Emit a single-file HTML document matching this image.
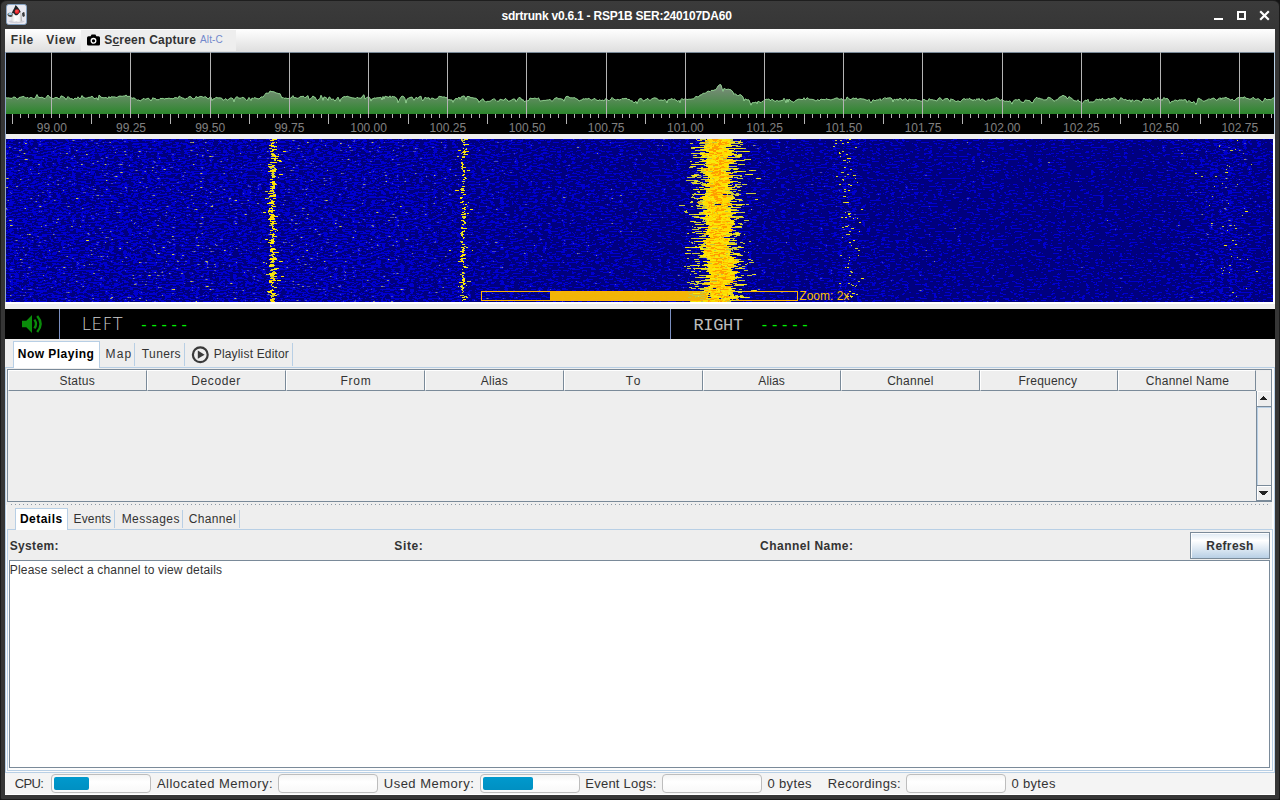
<!DOCTYPE html>
<html lang="en">
<head>
<meta charset="utf-8">
<title>sdrtrunk v0.6.1 - RSP1B SER:240107DA60</title>
<style>
*{box-sizing:border-box;margin:0;padding:0}
html,body{width:1280px;height:800px;overflow:hidden}
body{background:#141414;font-family:"Liberation Sans","DejaVu Sans",sans-serif;font-size:13px;color:#333;position:relative}
.abs{position:absolute}
.t{position:absolute;white-space:nowrap;line-height:1}
.b{font-weight:bold}
#frame{left:0;top:0;width:1280px;height:800px;background:#363636;border-radius:6px 6px 2px 2px;border:1px solid #1a1a1a}
#titlebar{left:1px;top:0;width:1278px;height:29px;border-radius:6px 6px 0 0;background:linear-gradient(#3b3b3b,#363636);border-top:1px solid #1e1e1e}
#content{left:5px;top:29px;width:1270px;height:766px;background:#eee}
#menubar{left:5px;top:29px;width:1270px;height:23px;background:linear-gradient(#fff,#dedede)}
#scbtn{left:81px;top:30px;width:155px;height:21px;background:#eee}
#spec{left:5px;top:52px;width:1270px;height:82px;background:#000}
#wf{left:6px;top:139px;width:1267px;height:163px;background:#000090;overflow:hidden}
#audio{left:5px;top:309px;width:1270px;height:30px;background:#000}
.tabsel{position:absolute;background:#fff;border:1px solid #b8cfe5;border-bottom:none}
.sepv{position:absolute;width:1px;background:#b8cfe5}
.hcell{position:absolute;top:370px;height:21px;border-left:1px solid #fff;border-top:1px solid #fff;border-right:1px solid #7a8a99;border-bottom:1px solid #7a8a99;text-align:center;font-size:13px;line-height:19px;color:#333}
.pb{position:absolute;top:774px;height:19px;width:100px;border:1px solid #bdbdbd;border-radius:4px;background:linear-gradient(#f4f4f4,#fff 40%,#f8f8f8)}
.pf{position:absolute;top:777px;height:13px;border-radius:2px;background:linear-gradient(#0099cd,#0090c2)}
.st{font-size:13.5px;color:#333;top:777px}
</style>
</head>
<body>
<div id="frame" class="abs"></div>
<div id="titlebar" class="abs"></div>

<!-- app icon -->
<svg class="abs" style="left:5.6px;top:4px" width="21" height="21" viewBox="0 0 21 21">
  <defs>
    <linearGradient id="dk1" x1="0" y1="0" x2="1" y2="0"><stop offset="0" stop-color="#d8d8d8"/><stop offset="0.35" stop-color="#fff"/><stop offset="0.75" stop-color="#f4f4f4"/><stop offset="1" stop-color="#a8a8a8"/></linearGradient>
    <radialGradient id="dk2" cx="0.4" cy="0.35" r="0.7"><stop offset="0" stop-color="#ff5a5a"/><stop offset="0.6" stop-color="#e8242a"/><stop offset="1" stop-color="#a01018"/></radialGradient>
  </defs>
  <rect x="0.5" y="0.5" width="20" height="20" rx="2.2" fill="#e9e9f1" stroke="#86a3c2"/>
  <ellipse cx="10.5" cy="17.6" rx="8" ry="1.6" fill="#cfcfd8"/>
  <path d="M5.9 8.8 C5.2 12 5.3 15 5.6 17 Q8 18.2 10.4 17.2 Q13.4 18.4 16 17 C16.1 14 15.6 10.5 14.7 8 L13 9 C11.5 12.2 9 11.6 8 9.4Z" fill="url(#dk1)"/>
  <path d="M9.6 1.1 C8.7 3.6 6.9 6.4 5.9 8.8 L8 9.4 C9 11.9 11.6 12.2 13 9 L14.7 8 C13.6 5.4 11.6 2.9 9.6 1.1Z" fill="#1f2426"/>
  <circle cx="11" cy="7.7" r="2.35" fill="url(#dk2)"/>
  <path d="M1.6 10.2 C1.6 8.6 6.6 8.2 6.7 10 L6.3 12.6 C4.5 13.4 2.2 12.8 1.8 11.6Z" fill="#4a4a48"/>
  <ellipse cx="4.1" cy="10" rx="2" ry="1" fill="#a8dcfa"/>
  <path d="M16 9.2 L17.6 8 L18.4 8.3 L18.9 12 L17.4 12.9 L16.4 12Z" fill="#3a3c3e"/>
</svg>

<!-- window controls -->
<div class="abs" style="left:1214px;top:18px;width:9px;height:2px;background:#fff"></div>
<div class="abs" style="left:1237px;top:11px;width:9px;height:9px;border:2px solid #fff"></div>
<svg class="abs" style="left:1259px;top:10px" width="11" height="11" viewBox="0 0 11 11"><path d="M1.2 1.2 L9.8 9.8 M9.8 1.2 L1.2 9.8" stroke="#fff" stroke-width="2.2" fill="none"/></svg>

<div id="content" class="abs"></div>
<div id="menubar" class="abs"></div>
<div id="scbtn" class="abs"></div>
<svg class="abs" style="left:87px;top:34px" width="13" height="12" viewBox="0 0 13 12">
  <path d="M1.5 2.2 H3.6 L4.6 0.6 H8.4 L9.4 2.2 H11.5 Q13 2.2 13 3.7 V10.2 Q13 11.6 11.5 11.6 H1.5 Q0 11.6 0 10.2 V3.7 Q0 2.2 1.5 2.2Z" fill="#000"/>
  <circle cx="6.5" cy="6.8" r="2.3" fill="none" stroke="#fff" stroke-width="1.3"/>
</svg>

<!-- spectrum -->
<div id="spec" class="abs"></div>
<svg class="abs" style="left:0;top:0" width="1280" height="140" viewBox="0 0 1280 140">
  <defs>
    <linearGradient id="sg" x1="0" y1="52" x2="0" y2="114" gradientUnits="userSpaceOnUse">
      <stop offset="0" stop-color="#d0d0d0"/><stop offset="0.55" stop-color="#7d8b7d"/><stop offset="0.78" stop-color="#558a55"/><stop offset="1" stop-color="#2c862c"/>
    </linearGradient>
  </defs>
  <rect x="5" y="52" width="1270" height="1" fill="#7a8a99"/>
  <polygon points="6,114 6,97.6 7,98.1 8,97.8 9,98.0 11,98.3 12,98.3 13,97.3 14,97.0 15,97.2 16,97.9 17,98.9 18,99.2 19,97.5 21,97.1 23,96.5 24,96.4 25,97.6 26,98.1 27,97.7 28,97.5 29,98.5 30,97.8 31,97.4 33,98.3 34,99.1 35,98.2 36,96.3 37,94.5 38,96.8 39,97.3 40,97.6 42,97.2 44,98.3 45,98.6 46,97.6 48,95.0 49,96.5 50,97.3 51,97.5 52,97.7 53,99.1 54,98.2 56,97.3 58,98.0 59,99.0 60,98.4 61,95.9 62,96.1 64,97.2 65,98.0 66,99.7 68,96.5 69,97.7 70,98.3 71,99.2 72,98.3 73,100.0 74,98.9 75,98.1 76,98.5 77,98.8 78,96.8 80,99.1 81,97.5 82,95.5 83,97.1 84,97.5 85,98.2 86,98.2 88,97.7 89,97.1 90,97.5 92,96.1 93,97.1 94,98.6 95,98.5 97,97.8 98,100.1 99,95.1 100,95.8 101,97.2 102,97.5 104,97.8 106,97.5 108,98.5 109,96.5 110,98.2 111,96.8 113,96.9 115,96.9 116,97.5 117,97.4 119,96.1 121,96.1 122,96.4 124,95.9 125,96.0 126,94.9 127,96.3 129,96.4 130,96.3 131,97.2 132,98.7 133,97.8 135,98.3 137,100.4 138,99.9 139,100.0 140,101.1 142,99.6 144,98.3 145,99.3 146,99.1 147,98.6 148,98.2 149,98.5 151,101.0 153,97.6 154,98.9 155,98.0 156,99.7 157,99.7 159,99.7 160,98.6 161,98.3 162,98.7 163,98.1 164,99.1 165,98.8 166,98.4 167,98.6 169,98.1 171,98.8 172,98.3 173,99.1 174,98.0 175,97.6 177,97.8 178,98.5 179,96.2 180,96.3 181,97.5 182,97.7 183,98.3 184,98.2 185,99.7 186,98.3 187,98.6 188,97.5 190,96.3 192,97.8 193,99.0 195,98.4 196,96.4 197,97.2 198,97.6 200,96.4 201,96.5 202,96.6 203,97.2 204,97.4 205,96.5 206,97.1 208,98.8 209,98.5 210,96.9 211,97.2 212,100.6 213,99.0 215,98.5 216,97.2 217,97.6 218,97.9 220,97.8 222,98.4 223,100.4 224,99.9 225,98.9 226,98.7 227,100.4 229,99.0 231,97.7 232,98.3 233,98.7 234,101.9 235,98.3 237,96.6 239,98.3 240,98.0 241,98.3 242,97.3 244,97.8 246,99.7 247,100.8 249,97.4 251,100.6 252,97.9 253,98.7 254,97.7 256,98.0 257,98.7 258,98.6 259,99.0 260,98.0 261,97.0 262,96.8 263,97.2 265,94.4 266,93.1 267,93.2 268,93.2 269,93.0 270,90.9 271,91.5 272,91.6 274,91.8 276,92.9 278,93.4 279,93.8 280,93.6 282,98.1 283,97.3 284,98.4 286,98.0 287,98.5 288,98.6 289,98.3 291,98.1 292,96.8 293,95.6 294,97.9 295,97.5 297,98.2 298,98.4 299,97.7 301,96.3 302,96.8 303,96.0 304,96.8 305,97.8 307,96.3 308,95.6 309,99.4 311,98.6 313,95.9 314,97.1 315,97.1 317,100.7 319,99.3 320,98.5 321,95.2 322,97.1 323,100.3 324,96.9 326,97.6 327,98.5 328,100.4 329,97.0 330,97.2 331,99.0 332,99.8 333,98.7 334,100.0 335,101.1 337,98.4 338,97.1 340,101.5 341,98.8 342,97.8 343,97.3 344,96.5 346,96.9 347,96.1 349,96.9 350,97.2 352,97.8 354,98.0 355,98.4 356,98.3 357,97.3 358,97.7 359,98.4 360,97.8 361,98.6 362,96.6 364,94.7 365,99.1 366,98.2 367,97.2 369,97.1 370,98.3 371,101.1 372,98.7 373,99.1 374,97.8 375,98.3 377,97.8 379,97.7 380,97.5 381,97.3 382,100.0 383,96.4 384,99.1 385,96.2 387,96.8 389,97.3 390,95.8 391,97.7 392,96.4 393,96.5 394,97.0 395,96.7 396,98.0 397,98.6 398,102.7 400,98.6 401,97.1 402,96.0 403,96.4 404,96.9 405,98.7 406,103.1 407,99.1 409,97.9 410,97.5 412,97.0 414,100.3 416,97.3 418,98.5 419,96.9 421,96.2 422,100.0 423,100.9 425,97.2 426,97.9 427,98.1 429,97.7 430,99.6 431,98.5 432,98.0 434,98.8 435,99.5 436,98.9 437,99.0 438,97.9 439,96.2 440,96.5 441,96.5 443,97.2 444,96.8 445,97.2 446,98.0 447,97.3 448,100.0 449,99.6 451,100.0 452,99.9 453,102.4 454,99.9 455,99.8 456,98.0 457,99.2 458,98.3 459,97.0 460,99.2 461,97.1 463,96.1 464,95.9 465,96.7 466,100.3 467,96.5 469,96.5 471,97.7 472,97.6 474,98.1 476,98.3 478,100.0 479,102.5 480,101.0 482,99.5 483,98.7 484,100.9 485,101.2 486,102.2 487,101.3 489,101.4 491,100.9 492,99.5 493,99.6 494,98.5 495,99.8 496,100.4 497,101.4 498,100.9 499,101.3 500,99.2 502,99.8 503,100.0 504,100.3 505,98.7 506,98.7 507,99.8 508,101.2 510,101.0 511,100.4 512,99.8 513,99.0 514,99.0 515,99.2 516,101.8 518,98.8 519,97.4 520,97.8 521,98.2 522,100.3 523,99.4 524,101.3 525,101.9 526,100.4 527,100.7 528,100.8 529,100.1 530,98.0 531,98.4 533,98.6 534,98.3 535,98.0 536,98.6 537,98.8 538,97.8 539,98.4 540,101.2 541,100.8 542,100.8 544,100.3 545,100.5 547,100.0 549,99.9 550,99.3 552,101.5 554,99.2 555,98.1 556,98.1 557,97.4 558,98.8 559,98.7 561,98.8 562,99.2 563,99.5 564,101.2 565,98.5 566,96.6 568,96.3 569,97.2 571,98.0 572,97.6 573,98.2 574,97.4 576,98.6 577,99.1 578,99.6 579,101.1 581,100.0 582,100.0 583,98.6 584,99.2 586,98.6 587,99.1 589,98.2 591,100.2 593,99.5 594,98.6 595,98.5 596,99.9 597,100.2 598,100.7 599,100.4 600,99.6 601,100.9 602,100.0 603,100.3 604,101.0 605,99.3 606,98.5 607,99.4 609,100.9 610,99.7 611,99.4 612,97.4 613,98.5 614,99.3 616,100.1 618,99.2 619,100.1 620,99.7 621,99.5 622,98.5 623,98.8 625,98.5 626,98.3 627,98.6 628,99.8 629,99.1 630,100.1 631,101.3 632,100.4 633,101.9 634,102.9 636,101.3 637,103.7 639,99.1 641,98.4 642,99.2 643,100.7 644,101.0 645,99.7 646,100.0 647,98.6 648,98.6 649,99.9 650,100.5 652,98.7 653,98.5 654,97.8 656,98.1 657,98.5 659,100.4 660,100.1 661,100.1 662,100.0 663,100.7 664,99.8 665,99.4 666,100.7 667,103.0 668,99.8 669,99.7 671,99.1 672,98.4 673,99.8 674,98.8 676,100.2 678,101.5 679,100.2 680,102.8 681,99.4 682,98.4 683,99.9 684,99.4 685,98.7 686,98.9 687,99.6 689,99.2 691,99.3 692,98.9 693,98.9 694,98.8 695,97.2 696,96.2 697,96.9 698,96.7 699,96.7 700,94.9 701,95.1 703,93.4 704,93.2 705,93.4 707,91.9 708,91.0 710,91.7 711,90.7 712,90.2 713,90.6 715,89.7 716,89.7 717,87.8 718,86.0 720,84.4 721,84.9 722,88.3 723,91.3 724,88.4 726,89.4 727,89.6 728,89.0 730,89.7 731,89.8 733,92.1 734,94.5 735,93.5 736,94.8 737,94.9 738,95.9 740,94.5 741,95.0 743,96.9 744,101.0 745,99.0 746,99.0 747,100.1 748,99.6 749,100.0 751,105.2 752,102.8 753,102.7 755,102.6 756,101.9 757,103.8 758,101.2 759,101.7 761,102.7 762,101.5 763,101.4 764,100.3 765,99.9 766,99.2 768,99.4 769,98.9 770,100.6 771,100.3 772,99.1 774,100.9 776,101.3 777,100.1 778,101.3 779,101.0 781,100.8 782,100.3 783,100.4 784,98.2 785,99.8 786,102.8 787,99.1 788,102.2 789,99.0 791,101.0 793,102.0 794,102.3 796,100.1 797,100.0 798,99.2 800,99.2 801,99.5 803,99.5 804,97.7 805,99.8 806,99.3 807,97.7 808,98.2 809,99.2 811,99.3 812,99.3 814,99.8 816,101.1 818,99.4 819,101.0 820,99.9 821,99.1 822,99.4 823,99.6 824,99.3 825,99.9 826,98.7 828,99.5 829,99.5 831,100.0 832,99.5 834,99.0 835,98.4 836,98.2 837,97.8 838,98.4 839,99.3 841,98.9 842,98.7 843,100.6 844,99.9 846,99.9 847,97.0 848,97.6 849,98.8 850,99.6 851,99.5 853,98.0 854,98.2 855,99.0 856,97.8 857,99.3 859,99.1 860,98.6 862,98.9 864,99.1 865,99.6 867,100.3 868,100.4 869,99.3 870,101.4 871,103.0 873,99.7 875,100.8 877,99.7 878,100.2 879,99.5 880,98.5 881,100.7 883,98.6 884,98.4 885,97.4 886,98.8 887,98.1 889,97.9 890,97.7 891,98.1 892,98.9 893,102.0 894,99.2 896,100.0 897,98.8 898,100.5 899,98.7 901,98.6 902,100.3 904,99.6 905,98.4 906,99.3 907,100.0 908,101.3 909,98.9 911,99.8 912,99.8 913,99.7 914,100.0 916,99.4 918,100.7 919,100.3 920,101.0 922,101.2 923,99.8 924,99.4 925,99.9 926,100.7 928,101.0 929,98.6 931,100.0 932,99.3 933,100.2 934,100.0 935,100.4 937,101.0 938,99.0 940,97.5 942,100.0 943,100.7 944,99.2 946,98.6 947,98.5 948,98.7 950,101.6 951,98.7 952,99.9 953,99.2 954,100.6 955,100.8 956,101.7 958,100.7 959,101.2 960,102.0 961,101.4 962,99.9 964,98.5 965,99.1 966,99.7 967,98.6 968,99.7 969,98.4 970,98.4 971,100.1 972,99.3 973,101.0 974,99.3 975,100.2 976,100.2 977,98.6 978,99.8 979,98.3 980,100.7 982,98.9 983,99.1 984,100.7 985,100.7 986,101.6 987,100.6 988,99.6 989,100.4 991,99.7 993,99.1 994,99.1 995,98.8 996,97.6 997,97.9 999,99.0 1000,100.9 1001,99.6 1002,99.9 1003,100.3 1004,100.9 1005,101.4 1007,101.0 1008,101.7 1010,100.8 1012,104.1 1013,101.4 1014,100.5 1015,99.9 1016,99.6 1017,100.2 1018,99.9 1019,99.0 1020,100.6 1021,101.8 1022,102.3 1024,102.4 1025,100.2 1026,100.0 1027,100.3 1029,100.6 1030,100.8 1031,102.7 1033,102.7 1034,100.0 1035,98.9 1036,97.7 1037,97.3 1038,98.6 1039,98.0 1040,98.5 1041,99.0 1042,98.9 1044,100.2 1045,99.7 1046,100.0 1047,99.3 1048,97.3 1049,97.4 1051,98.2 1052,99.4 1053,99.8 1054,101.5 1055,100.6 1056,99.6 1057,100.4 1058,99.0 1059,97.5 1061,96.6 1063,95.3 1065,96.3 1066,96.6 1067,98.7 1068,98.3 1069,96.5 1071,98.1 1072,98.4 1073,99.6 1074,101.0 1075,100.5 1076,101.3 1077,101.0 1078,99.7 1079,101.7 1080,101.3 1082,103.5 1083,102.4 1084,101.5 1085,100.2 1087,100.6 1088,99.2 1089,102.4 1091,101.8 1092,102.1 1094,101.8 1095,100.6 1096,99.2 1097,99.2 1098,99.8 1099,99.6 1100,98.8 1101,100.7 1102,98.4 1103,98.7 1104,99.8 1105,100.0 1106,99.8 1108,98.8 1109,98.1 1110,100.3 1111,98.4 1112,98.8 1113,98.0 1115,97.8 1117,99.8 1118,100.9 1119,100.6 1121,97.5 1122,98.8 1123,98.8 1124,99.9 1125,99.5 1126,99.3 1127,100.9 1128,100.1 1129,100.5 1130,99.7 1131,102.1 1132,99.8 1133,100.3 1134,101.5 1135,100.7 1136,100.2 1137,100.2 1139,100.8 1140,101.2 1141,102.3 1142,101.7 1144,98.1 1145,99.8 1146,99.2 1147,99.4 1148,99.6 1149,98.6 1150,99.5 1151,99.7 1153,101.0 1154,99.8 1155,98.7 1156,99.1 1157,99.4 1158,97.3 1159,99.7 1160,99.1 1161,99.1 1162,100.6 1163,98.8 1164,97.4 1165,98.9 1167,98.4 1168,99.0 1169,100.5 1170,103.3 1172,101.1 1173,101.5 1175,99.9 1177,100.7 1178,101.1 1179,99.7 1180,100.2 1181,99.8 1183,100.2 1185,99.5 1186,100.0 1187,102.5 1189,100.3 1190,101.7 1191,102.1 1192,102.9 1193,102.1 1194,101.5 1196,104.7 1197,102.3 1198,98.4 1199,98.2 1200,99.1 1201,99.5 1202,100.2 1203,101.2 1205,101.0 1206,100.4 1207,100.0 1208,99.7 1209,98.6 1210,99.7 1211,99.0 1213,98.2 1214,98.1 1215,99.1 1217,100.6 1218,99.0 1219,98.7 1220,97.6 1221,99.3 1222,98.0 1223,98.2 1225,97.8 1226,97.1 1227,98.2 1229,98.8 1231,100.3 1232,99.0 1233,99.8 1234,100.9 1236,99.3 1237,97.9 1238,98.0 1239,97.0 1240,97.3 1241,98.1 1242,97.1 1243,98.3 1244,96.7 1246,98.0 1247,98.6 1248,98.4 1249,99.2 1251,99.0 1252,98.4 1253,97.2 1254,98.1 1255,99.1 1256,99.3 1257,99.2 1258,98.5 1260,100.1 1261,100.6 1262,101.9 1263,101.9 1265,98.0 1266,99.2 1267,99.9 1268,99.5 1269,99.4 1271,99.8 1273,97.7 1274,98.4 1274,114" fill="url(#sg)"/>
  <polyline points="6,97.6 7,98.1 8,97.8 9,98.0 11,98.3 12,98.3 13,97.3 14,97.0 15,97.2 16,97.9 17,98.9 18,99.2 19,97.5 21,97.1 23,96.5 24,96.4 25,97.6 26,98.1 27,97.7 28,97.5 29,98.5 30,97.8 31,97.4 33,98.3 34,99.1 35,98.2 36,96.3 37,94.5 38,96.8 39,97.3 40,97.6 42,97.2 44,98.3 45,98.6 46,97.6 48,95.0 49,96.5 50,97.3 51,97.5 52,97.7 53,99.1 54,98.2 56,97.3 58,98.0 59,99.0 60,98.4 61,95.9 62,96.1 64,97.2 65,98.0 66,99.7 68,96.5 69,97.7 70,98.3 71,99.2 72,98.3 73,100.0 74,98.9 75,98.1 76,98.5 77,98.8 78,96.8 80,99.1 81,97.5 82,95.5 83,97.1 84,97.5 85,98.2 86,98.2 88,97.7 89,97.1 90,97.5 92,96.1 93,97.1 94,98.6 95,98.5 97,97.8 98,100.1 99,95.1 100,95.8 101,97.2 102,97.5 104,97.8 106,97.5 108,98.5 109,96.5 110,98.2 111,96.8 113,96.9 115,96.9 116,97.5 117,97.4 119,96.1 121,96.1 122,96.4 124,95.9 125,96.0 126,94.9 127,96.3 129,96.4 130,96.3 131,97.2 132,98.7 133,97.8 135,98.3 137,100.4 138,99.9 139,100.0 140,101.1 142,99.6 144,98.3 145,99.3 146,99.1 147,98.6 148,98.2 149,98.5 151,101.0 153,97.6 154,98.9 155,98.0 156,99.7 157,99.7 159,99.7 160,98.6 161,98.3 162,98.7 163,98.1 164,99.1 165,98.8 166,98.4 167,98.6 169,98.1 171,98.8 172,98.3 173,99.1 174,98.0 175,97.6 177,97.8 178,98.5 179,96.2 180,96.3 181,97.5 182,97.7 183,98.3 184,98.2 185,99.7 186,98.3 187,98.6 188,97.5 190,96.3 192,97.8 193,99.0 195,98.4 196,96.4 197,97.2 198,97.6 200,96.4 201,96.5 202,96.6 203,97.2 204,97.4 205,96.5 206,97.1 208,98.8 209,98.5 210,96.9 211,97.2 212,100.6 213,99.0 215,98.5 216,97.2 217,97.6 218,97.9 220,97.8 222,98.4 223,100.4 224,99.9 225,98.9 226,98.7 227,100.4 229,99.0 231,97.7 232,98.3 233,98.7 234,101.9 235,98.3 237,96.6 239,98.3 240,98.0 241,98.3 242,97.3 244,97.8 246,99.7 247,100.8 249,97.4 251,100.6 252,97.9 253,98.7 254,97.7 256,98.0 257,98.7 258,98.6 259,99.0 260,98.0 261,97.0 262,96.8 263,97.2 265,94.4 266,93.1 267,93.2 268,93.2 269,93.0 270,90.9 271,91.5 272,91.6 274,91.8 276,92.9 278,93.4 279,93.8 280,93.6 282,98.1 283,97.3 284,98.4 286,98.0 287,98.5 288,98.6 289,98.3 291,98.1 292,96.8 293,95.6 294,97.9 295,97.5 297,98.2 298,98.4 299,97.7 301,96.3 302,96.8 303,96.0 304,96.8 305,97.8 307,96.3 308,95.6 309,99.4 311,98.6 313,95.9 314,97.1 315,97.1 317,100.7 319,99.3 320,98.5 321,95.2 322,97.1 323,100.3 324,96.9 326,97.6 327,98.5 328,100.4 329,97.0 330,97.2 331,99.0 332,99.8 333,98.7 334,100.0 335,101.1 337,98.4 338,97.1 340,101.5 341,98.8 342,97.8 343,97.3 344,96.5 346,96.9 347,96.1 349,96.9 350,97.2 352,97.8 354,98.0 355,98.4 356,98.3 357,97.3 358,97.7 359,98.4 360,97.8 361,98.6 362,96.6 364,94.7 365,99.1 366,98.2 367,97.2 369,97.1 370,98.3 371,101.1 372,98.7 373,99.1 374,97.8 375,98.3 377,97.8 379,97.7 380,97.5 381,97.3 382,100.0 383,96.4 384,99.1 385,96.2 387,96.8 389,97.3 390,95.8 391,97.7 392,96.4 393,96.5 394,97.0 395,96.7 396,98.0 397,98.6 398,102.7 400,98.6 401,97.1 402,96.0 403,96.4 404,96.9 405,98.7 406,103.1 407,99.1 409,97.9 410,97.5 412,97.0 414,100.3 416,97.3 418,98.5 419,96.9 421,96.2 422,100.0 423,100.9 425,97.2 426,97.9 427,98.1 429,97.7 430,99.6 431,98.5 432,98.0 434,98.8 435,99.5 436,98.9 437,99.0 438,97.9 439,96.2 440,96.5 441,96.5 443,97.2 444,96.8 445,97.2 446,98.0 447,97.3 448,100.0 449,99.6 451,100.0 452,99.9 453,102.4 454,99.9 455,99.8 456,98.0 457,99.2 458,98.3 459,97.0 460,99.2 461,97.1 463,96.1 464,95.9 465,96.7 466,100.3 467,96.5 469,96.5 471,97.7 472,97.6 474,98.1 476,98.3 478,100.0 479,102.5 480,101.0 482,99.5 483,98.7 484,100.9 485,101.2 486,102.2 487,101.3 489,101.4 491,100.9 492,99.5 493,99.6 494,98.5 495,99.8 496,100.4 497,101.4 498,100.9 499,101.3 500,99.2 502,99.8 503,100.0 504,100.3 505,98.7 506,98.7 507,99.8 508,101.2 510,101.0 511,100.4 512,99.8 513,99.0 514,99.0 515,99.2 516,101.8 518,98.8 519,97.4 520,97.8 521,98.2 522,100.3 523,99.4 524,101.3 525,101.9 526,100.4 527,100.7 528,100.8 529,100.1 530,98.0 531,98.4 533,98.6 534,98.3 535,98.0 536,98.6 537,98.8 538,97.8 539,98.4 540,101.2 541,100.8 542,100.8 544,100.3 545,100.5 547,100.0 549,99.9 550,99.3 552,101.5 554,99.2 555,98.1 556,98.1 557,97.4 558,98.8 559,98.7 561,98.8 562,99.2 563,99.5 564,101.2 565,98.5 566,96.6 568,96.3 569,97.2 571,98.0 572,97.6 573,98.2 574,97.4 576,98.6 577,99.1 578,99.6 579,101.1 581,100.0 582,100.0 583,98.6 584,99.2 586,98.6 587,99.1 589,98.2 591,100.2 593,99.5 594,98.6 595,98.5 596,99.9 597,100.2 598,100.7 599,100.4 600,99.6 601,100.9 602,100.0 603,100.3 604,101.0 605,99.3 606,98.5 607,99.4 609,100.9 610,99.7 611,99.4 612,97.4 613,98.5 614,99.3 616,100.1 618,99.2 619,100.1 620,99.7 621,99.5 622,98.5 623,98.8 625,98.5 626,98.3 627,98.6 628,99.8 629,99.1 630,100.1 631,101.3 632,100.4 633,101.9 634,102.9 636,101.3 637,103.7 639,99.1 641,98.4 642,99.2 643,100.7 644,101.0 645,99.7 646,100.0 647,98.6 648,98.6 649,99.9 650,100.5 652,98.7 653,98.5 654,97.8 656,98.1 657,98.5 659,100.4 660,100.1 661,100.1 662,100.0 663,100.7 664,99.8 665,99.4 666,100.7 667,103.0 668,99.8 669,99.7 671,99.1 672,98.4 673,99.8 674,98.8 676,100.2 678,101.5 679,100.2 680,102.8 681,99.4 682,98.4 683,99.9 684,99.4 685,98.7 686,98.9 687,99.6 689,99.2 691,99.3 692,98.9 693,98.9 694,98.8 695,97.2 696,96.2 697,96.9 698,96.7 699,96.7 700,94.9 701,95.1 703,93.4 704,93.2 705,93.4 707,91.9 708,91.0 710,91.7 711,90.7 712,90.2 713,90.6 715,89.7 716,89.7 717,87.8 718,86.0 720,84.4 721,84.9 722,88.3 723,91.3 724,88.4 726,89.4 727,89.6 728,89.0 730,89.7 731,89.8 733,92.1 734,94.5 735,93.5 736,94.8 737,94.9 738,95.9 740,94.5 741,95.0 743,96.9 744,101.0 745,99.0 746,99.0 747,100.1 748,99.6 749,100.0 751,105.2 752,102.8 753,102.7 755,102.6 756,101.9 757,103.8 758,101.2 759,101.7 761,102.7 762,101.5 763,101.4 764,100.3 765,99.9 766,99.2 768,99.4 769,98.9 770,100.6 771,100.3 772,99.1 774,100.9 776,101.3 777,100.1 778,101.3 779,101.0 781,100.8 782,100.3 783,100.4 784,98.2 785,99.8 786,102.8 787,99.1 788,102.2 789,99.0 791,101.0 793,102.0 794,102.3 796,100.1 797,100.0 798,99.2 800,99.2 801,99.5 803,99.5 804,97.7 805,99.8 806,99.3 807,97.7 808,98.2 809,99.2 811,99.3 812,99.3 814,99.8 816,101.1 818,99.4 819,101.0 820,99.9 821,99.1 822,99.4 823,99.6 824,99.3 825,99.9 826,98.7 828,99.5 829,99.5 831,100.0 832,99.5 834,99.0 835,98.4 836,98.2 837,97.8 838,98.4 839,99.3 841,98.9 842,98.7 843,100.6 844,99.9 846,99.9 847,97.0 848,97.6 849,98.8 850,99.6 851,99.5 853,98.0 854,98.2 855,99.0 856,97.8 857,99.3 859,99.1 860,98.6 862,98.9 864,99.1 865,99.6 867,100.3 868,100.4 869,99.3 870,101.4 871,103.0 873,99.7 875,100.8 877,99.7 878,100.2 879,99.5 880,98.5 881,100.7 883,98.6 884,98.4 885,97.4 886,98.8 887,98.1 889,97.9 890,97.7 891,98.1 892,98.9 893,102.0 894,99.2 896,100.0 897,98.8 898,100.5 899,98.7 901,98.6 902,100.3 904,99.6 905,98.4 906,99.3 907,100.0 908,101.3 909,98.9 911,99.8 912,99.8 913,99.7 914,100.0 916,99.4 918,100.7 919,100.3 920,101.0 922,101.2 923,99.8 924,99.4 925,99.9 926,100.7 928,101.0 929,98.6 931,100.0 932,99.3 933,100.2 934,100.0 935,100.4 937,101.0 938,99.0 940,97.5 942,100.0 943,100.7 944,99.2 946,98.6 947,98.5 948,98.7 950,101.6 951,98.7 952,99.9 953,99.2 954,100.6 955,100.8 956,101.7 958,100.7 959,101.2 960,102.0 961,101.4 962,99.9 964,98.5 965,99.1 966,99.7 967,98.6 968,99.7 969,98.4 970,98.4 971,100.1 972,99.3 973,101.0 974,99.3 975,100.2 976,100.2 977,98.6 978,99.8 979,98.3 980,100.7 982,98.9 983,99.1 984,100.7 985,100.7 986,101.6 987,100.6 988,99.6 989,100.4 991,99.7 993,99.1 994,99.1 995,98.8 996,97.6 997,97.9 999,99.0 1000,100.9 1001,99.6 1002,99.9 1003,100.3 1004,100.9 1005,101.4 1007,101.0 1008,101.7 1010,100.8 1012,104.1 1013,101.4 1014,100.5 1015,99.9 1016,99.6 1017,100.2 1018,99.9 1019,99.0 1020,100.6 1021,101.8 1022,102.3 1024,102.4 1025,100.2 1026,100.0 1027,100.3 1029,100.6 1030,100.8 1031,102.7 1033,102.7 1034,100.0 1035,98.9 1036,97.7 1037,97.3 1038,98.6 1039,98.0 1040,98.5 1041,99.0 1042,98.9 1044,100.2 1045,99.7 1046,100.0 1047,99.3 1048,97.3 1049,97.4 1051,98.2 1052,99.4 1053,99.8 1054,101.5 1055,100.6 1056,99.6 1057,100.4 1058,99.0 1059,97.5 1061,96.6 1063,95.3 1065,96.3 1066,96.6 1067,98.7 1068,98.3 1069,96.5 1071,98.1 1072,98.4 1073,99.6 1074,101.0 1075,100.5 1076,101.3 1077,101.0 1078,99.7 1079,101.7 1080,101.3 1082,103.5 1083,102.4 1084,101.5 1085,100.2 1087,100.6 1088,99.2 1089,102.4 1091,101.8 1092,102.1 1094,101.8 1095,100.6 1096,99.2 1097,99.2 1098,99.8 1099,99.6 1100,98.8 1101,100.7 1102,98.4 1103,98.7 1104,99.8 1105,100.0 1106,99.8 1108,98.8 1109,98.1 1110,100.3 1111,98.4 1112,98.8 1113,98.0 1115,97.8 1117,99.8 1118,100.9 1119,100.6 1121,97.5 1122,98.8 1123,98.8 1124,99.9 1125,99.5 1126,99.3 1127,100.9 1128,100.1 1129,100.5 1130,99.7 1131,102.1 1132,99.8 1133,100.3 1134,101.5 1135,100.7 1136,100.2 1137,100.2 1139,100.8 1140,101.2 1141,102.3 1142,101.7 1144,98.1 1145,99.8 1146,99.2 1147,99.4 1148,99.6 1149,98.6 1150,99.5 1151,99.7 1153,101.0 1154,99.8 1155,98.7 1156,99.1 1157,99.4 1158,97.3 1159,99.7 1160,99.1 1161,99.1 1162,100.6 1163,98.8 1164,97.4 1165,98.9 1167,98.4 1168,99.0 1169,100.5 1170,103.3 1172,101.1 1173,101.5 1175,99.9 1177,100.7 1178,101.1 1179,99.7 1180,100.2 1181,99.8 1183,100.2 1185,99.5 1186,100.0 1187,102.5 1189,100.3 1190,101.7 1191,102.1 1192,102.9 1193,102.1 1194,101.5 1196,104.7 1197,102.3 1198,98.4 1199,98.2 1200,99.1 1201,99.5 1202,100.2 1203,101.2 1205,101.0 1206,100.4 1207,100.0 1208,99.7 1209,98.6 1210,99.7 1211,99.0 1213,98.2 1214,98.1 1215,99.1 1217,100.6 1218,99.0 1219,98.7 1220,97.6 1221,99.3 1222,98.0 1223,98.2 1225,97.8 1226,97.1 1227,98.2 1229,98.8 1231,100.3 1232,99.0 1233,99.8 1234,100.9 1236,99.3 1237,97.9 1238,98.0 1239,97.0 1240,97.3 1241,98.1 1242,97.1 1243,98.3 1244,96.7 1246,98.0 1247,98.6 1248,98.4 1249,99.2 1251,99.0 1252,98.4 1253,97.2 1254,98.1 1255,99.1 1256,99.3 1257,99.2 1258,98.5 1260,100.1 1261,100.6 1262,101.9 1263,101.9 1265,98.0 1266,99.2 1267,99.9 1268,99.5 1269,99.4 1271,99.8 1273,97.7 1274,98.4" fill="none" stroke="#98dc98" stroke-width="1" stroke-opacity="0.9"/>
  <rect x="51" y="52" width="1" height="66" fill="#b4b4b4"/>
<rect x="130" y="52" width="1" height="66" fill="#b4b4b4"/>
<rect x="210" y="52" width="1" height="66" fill="#b4b4b4"/>
<rect x="289" y="52" width="1" height="66" fill="#b4b4b4"/>
<rect x="368" y="52" width="1" height="66" fill="#b4b4b4"/>
<rect x="447" y="52" width="1" height="66" fill="#b4b4b4"/>
<rect x="526" y="52" width="1" height="66" fill="#b4b4b4"/>
<rect x="606" y="52" width="1" height="66" fill="#b4b4b4"/>
<rect x="685" y="52" width="1" height="66" fill="#b4b4b4"/>
<rect x="764" y="52" width="1" height="66" fill="#b4b4b4"/>
<rect x="843" y="52" width="1" height="66" fill="#b4b4b4"/>
<rect x="922" y="52" width="1" height="66" fill="#b4b4b4"/>
<rect x="1002" y="52" width="1" height="66" fill="#b4b4b4"/>
<rect x="1081" y="52" width="1" height="66" fill="#b4b4b4"/>
<rect x="1160" y="52" width="1" height="66" fill="#b4b4b4"/>
<rect x="1239" y="52" width="1" height="66" fill="#b4b4b4"/>
  <rect x="12" y="114" width="1" height="10" fill="#b4b4b4"/>
<rect x="20" y="114" width="1" height="4" fill="#b4b4b4"/>
<rect x="28" y="114" width="1" height="4" fill="#b4b4b4"/>
<rect x="35" y="114" width="1" height="4" fill="#b4b4b4"/>
<rect x="43" y="114" width="1" height="4" fill="#b4b4b4"/>
<rect x="59" y="114" width="1" height="4" fill="#b4b4b4"/>
<rect x="67" y="114" width="1" height="4" fill="#b4b4b4"/>
<rect x="75" y="114" width="1" height="4" fill="#b4b4b4"/>
<rect x="83" y="114" width="1" height="4" fill="#b4b4b4"/>
<rect x="91" y="114" width="1" height="10" fill="#b4b4b4"/>
<rect x="99" y="114" width="1" height="4" fill="#b4b4b4"/>
<rect x="107" y="114" width="1" height="4" fill="#b4b4b4"/>
<rect x="115" y="114" width="1" height="4" fill="#b4b4b4"/>
<rect x="123" y="114" width="1" height="4" fill="#b4b4b4"/>
<rect x="138" y="114" width="1" height="4" fill="#b4b4b4"/>
<rect x="146" y="114" width="1" height="4" fill="#b4b4b4"/>
<rect x="154" y="114" width="1" height="4" fill="#b4b4b4"/>
<rect x="162" y="114" width="1" height="4" fill="#b4b4b4"/>
<rect x="170" y="114" width="1" height="10" fill="#b4b4b4"/>
<rect x="178" y="114" width="1" height="4" fill="#b4b4b4"/>
<rect x="186" y="114" width="1" height="4" fill="#b4b4b4"/>
<rect x="194" y="114" width="1" height="4" fill="#b4b4b4"/>
<rect x="202" y="114" width="1" height="4" fill="#b4b4b4"/>
<rect x="218" y="114" width="1" height="4" fill="#b4b4b4"/>
<rect x="226" y="114" width="1" height="4" fill="#b4b4b4"/>
<rect x="233" y="114" width="1" height="4" fill="#b4b4b4"/>
<rect x="241" y="114" width="1" height="4" fill="#b4b4b4"/>
<rect x="249" y="114" width="1" height="10" fill="#b4b4b4"/>
<rect x="257" y="114" width="1" height="4" fill="#b4b4b4"/>
<rect x="265" y="114" width="1" height="4" fill="#b4b4b4"/>
<rect x="273" y="114" width="1" height="4" fill="#b4b4b4"/>
<rect x="281" y="114" width="1" height="4" fill="#b4b4b4"/>
<rect x="297" y="114" width="1" height="4" fill="#b4b4b4"/>
<rect x="305" y="114" width="1" height="4" fill="#b4b4b4"/>
<rect x="313" y="114" width="1" height="4" fill="#b4b4b4"/>
<rect x="321" y="114" width="1" height="4" fill="#b4b4b4"/>
<rect x="328" y="114" width="1" height="10" fill="#b4b4b4"/>
<rect x="336" y="114" width="1" height="4" fill="#b4b4b4"/>
<rect x="344" y="114" width="1" height="4" fill="#b4b4b4"/>
<rect x="352" y="114" width="1" height="4" fill="#b4b4b4"/>
<rect x="360" y="114" width="1" height="4" fill="#b4b4b4"/>
<rect x="376" y="114" width="1" height="4" fill="#b4b4b4"/>
<rect x="384" y="114" width="1" height="4" fill="#b4b4b4"/>
<rect x="392" y="114" width="1" height="4" fill="#b4b4b4"/>
<rect x="400" y="114" width="1" height="4" fill="#b4b4b4"/>
<rect x="408" y="114" width="1" height="10" fill="#b4b4b4"/>
<rect x="416" y="114" width="1" height="4" fill="#b4b4b4"/>
<rect x="424" y="114" width="1" height="4" fill="#b4b4b4"/>
<rect x="431" y="114" width="1" height="4" fill="#b4b4b4"/>
<rect x="439" y="114" width="1" height="4" fill="#b4b4b4"/>
<rect x="455" y="114" width="1" height="4" fill="#b4b4b4"/>
<rect x="463" y="114" width="1" height="4" fill="#b4b4b4"/>
<rect x="471" y="114" width="1" height="4" fill="#b4b4b4"/>
<rect x="479" y="114" width="1" height="4" fill="#b4b4b4"/>
<rect x="487" y="114" width="1" height="10" fill="#b4b4b4"/>
<rect x="495" y="114" width="1" height="4" fill="#b4b4b4"/>
<rect x="503" y="114" width="1" height="4" fill="#b4b4b4"/>
<rect x="511" y="114" width="1" height="4" fill="#b4b4b4"/>
<rect x="519" y="114" width="1" height="4" fill="#b4b4b4"/>
<rect x="534" y="114" width="1" height="4" fill="#b4b4b4"/>
<rect x="542" y="114" width="1" height="4" fill="#b4b4b4"/>
<rect x="550" y="114" width="1" height="4" fill="#b4b4b4"/>
<rect x="558" y="114" width="1" height="4" fill="#b4b4b4"/>
<rect x="566" y="114" width="1" height="10" fill="#b4b4b4"/>
<rect x="574" y="114" width="1" height="4" fill="#b4b4b4"/>
<rect x="582" y="114" width="1" height="4" fill="#b4b4b4"/>
<rect x="590" y="114" width="1" height="4" fill="#b4b4b4"/>
<rect x="598" y="114" width="1" height="4" fill="#b4b4b4"/>
<rect x="614" y="114" width="1" height="4" fill="#b4b4b4"/>
<rect x="622" y="114" width="1" height="4" fill="#b4b4b4"/>
<rect x="629" y="114" width="1" height="4" fill="#b4b4b4"/>
<rect x="637" y="114" width="1" height="4" fill="#b4b4b4"/>
<rect x="645" y="114" width="1" height="10" fill="#b4b4b4"/>
<rect x="653" y="114" width="1" height="4" fill="#b4b4b4"/>
<rect x="661" y="114" width="1" height="4" fill="#b4b4b4"/>
<rect x="669" y="114" width="1" height="4" fill="#b4b4b4"/>
<rect x="677" y="114" width="1" height="4" fill="#b4b4b4"/>
<rect x="693" y="114" width="1" height="4" fill="#b4b4b4"/>
<rect x="701" y="114" width="1" height="4" fill="#b4b4b4"/>
<rect x="709" y="114" width="1" height="4" fill="#b4b4b4"/>
<rect x="717" y="114" width="1" height="4" fill="#b4b4b4"/>
<rect x="724" y="114" width="1" height="10" fill="#b4b4b4"/>
<rect x="732" y="114" width="1" height="4" fill="#b4b4b4"/>
<rect x="740" y="114" width="1" height="4" fill="#b4b4b4"/>
<rect x="748" y="114" width="1" height="4" fill="#b4b4b4"/>
<rect x="756" y="114" width="1" height="4" fill="#b4b4b4"/>
<rect x="772" y="114" width="1" height="4" fill="#b4b4b4"/>
<rect x="780" y="114" width="1" height="4" fill="#b4b4b4"/>
<rect x="788" y="114" width="1" height="4" fill="#b4b4b4"/>
<rect x="796" y="114" width="1" height="4" fill="#b4b4b4"/>
<rect x="804" y="114" width="1" height="10" fill="#b4b4b4"/>
<rect x="812" y="114" width="1" height="4" fill="#b4b4b4"/>
<rect x="820" y="114" width="1" height="4" fill="#b4b4b4"/>
<rect x="827" y="114" width="1" height="4" fill="#b4b4b4"/>
<rect x="835" y="114" width="1" height="4" fill="#b4b4b4"/>
<rect x="851" y="114" width="1" height="4" fill="#b4b4b4"/>
<rect x="859" y="114" width="1" height="4" fill="#b4b4b4"/>
<rect x="867" y="114" width="1" height="4" fill="#b4b4b4"/>
<rect x="875" y="114" width="1" height="4" fill="#b4b4b4"/>
<rect x="883" y="114" width="1" height="10" fill="#b4b4b4"/>
<rect x="891" y="114" width="1" height="4" fill="#b4b4b4"/>
<rect x="899" y="114" width="1" height="4" fill="#b4b4b4"/>
<rect x="907" y="114" width="1" height="4" fill="#b4b4b4"/>
<rect x="915" y="114" width="1" height="4" fill="#b4b4b4"/>
<rect x="930" y="114" width="1" height="4" fill="#b4b4b4"/>
<rect x="938" y="114" width="1" height="4" fill="#b4b4b4"/>
<rect x="946" y="114" width="1" height="4" fill="#b4b4b4"/>
<rect x="954" y="114" width="1" height="4" fill="#b4b4b4"/>
<rect x="962" y="114" width="1" height="10" fill="#b4b4b4"/>
<rect x="970" y="114" width="1" height="4" fill="#b4b4b4"/>
<rect x="978" y="114" width="1" height="4" fill="#b4b4b4"/>
<rect x="986" y="114" width="1" height="4" fill="#b4b4b4"/>
<rect x="994" y="114" width="1" height="4" fill="#b4b4b4"/>
<rect x="1010" y="114" width="1" height="4" fill="#b4b4b4"/>
<rect x="1018" y="114" width="1" height="4" fill="#b4b4b4"/>
<rect x="1025" y="114" width="1" height="4" fill="#b4b4b4"/>
<rect x="1033" y="114" width="1" height="4" fill="#b4b4b4"/>
<rect x="1041" y="114" width="1" height="10" fill="#b4b4b4"/>
<rect x="1049" y="114" width="1" height="4" fill="#b4b4b4"/>
<rect x="1057" y="114" width="1" height="4" fill="#b4b4b4"/>
<rect x="1065" y="114" width="1" height="4" fill="#b4b4b4"/>
<rect x="1073" y="114" width="1" height="4" fill="#b4b4b4"/>
<rect x="1089" y="114" width="1" height="4" fill="#b4b4b4"/>
<rect x="1097" y="114" width="1" height="4" fill="#b4b4b4"/>
<rect x="1105" y="114" width="1" height="4" fill="#b4b4b4"/>
<rect x="1113" y="114" width="1" height="4" fill="#b4b4b4"/>
<rect x="1120" y="114" width="1" height="10" fill="#b4b4b4"/>
<rect x="1128" y="114" width="1" height="4" fill="#b4b4b4"/>
<rect x="1136" y="114" width="1" height="4" fill="#b4b4b4"/>
<rect x="1144" y="114" width="1" height="4" fill="#b4b4b4"/>
<rect x="1152" y="114" width="1" height="4" fill="#b4b4b4"/>
<rect x="1168" y="114" width="1" height="4" fill="#b4b4b4"/>
<rect x="1176" y="114" width="1" height="4" fill="#b4b4b4"/>
<rect x="1184" y="114" width="1" height="4" fill="#b4b4b4"/>
<rect x="1192" y="114" width="1" height="4" fill="#b4b4b4"/>
<rect x="1200" y="114" width="1" height="10" fill="#b4b4b4"/>
<rect x="1208" y="114" width="1" height="4" fill="#b4b4b4"/>
<rect x="1216" y="114" width="1" height="4" fill="#b4b4b4"/>
<rect x="1223" y="114" width="1" height="4" fill="#b4b4b4"/>
<rect x="1231" y="114" width="1" height="4" fill="#b4b4b4"/>
<rect x="1247" y="114" width="1" height="4" fill="#b4b4b4"/>
<rect x="1255" y="114" width="1" height="4" fill="#b4b4b4"/>
<rect x="1263" y="114" width="1" height="4" fill="#b4b4b4"/>
<rect x="1271" y="114" width="1" height="4" fill="#b4b4b4"/>
  <g font-family="Liberation Sans, DejaVu Sans, sans-serif" font-size="12" fill="#808080" text-anchor="middle">
  <text x="51.8" y="132">99.00</text>
<text x="131.0" y="132">99.25</text>
<text x="210.2" y="132">99.50</text>
<text x="289.4" y="132">99.75</text>
<text x="368.6" y="132">100.00</text>
<text x="447.8" y="132">100.25</text>
<text x="527.0" y="132">100.50</text>
<text x="606.2" y="132">100.75</text>
<text x="685.4" y="132">101.00</text>
<text x="764.6" y="132">101.25</text>
<text x="843.8" y="132">101.50</text>
<text x="923.0" y="132">101.75</text>
<text x="1002.2" y="132">102.00</text>
<text x="1081.4" y="132">102.25</text>
<text x="1160.6" y="132">102.50</text>
<text x="1239.8" y="132">102.75</text>
  </g>
  <rect x="5" y="52" width="1" height="82" fill="#8ea4c4"/>
  <rect x="1274" y="52" width="1" height="82" fill="#b8cfe5"/>
</svg>

<!-- waterfall -->
<div id="wf" class="abs"></div>
<svg class="abs" style="left:0;top:0" width="1280" height="310" viewBox="0 0 1280 310" shape-rendering="crispEdges">
  <defs>
    <linearGradient id="dens" x1="6" y1="0" x2="1274" y2="0" gradientUnits="userSpaceOnUse">
      <stop offset="0.0000" stop-color="#181818"/><stop offset="0.3028" stop-color="#161616"/><stop offset="0.3975" stop-color="#0e0e0e"/><stop offset="0.5599" stop-color="#080808"/><stop offset="0.6435" stop-color="#050505"/><stop offset="0.6617" stop-color="#121212"/><stop offset="0.6798" stop-color="#040404"/><stop offset="0.9022" stop-color="#010101"/><stop offset="0.9377" stop-color="#0a0a0a"/><stop offset="0.9614" stop-color="#141414"/><stop offset="0.9826" stop-color="#0a0a0a"/><stop offset="1.0000" stop-color="#060606"/>
    </linearGradient>
    <filter id="wfn" x="6" y="139" width="1267" height="163" filterUnits="userSpaceOnUse" color-interpolation-filters="sRGB">
      <feTurbulence type="fractalNoise" baseFrequency="0.21 0.64" numOctaves="2" seed="11" result="n"/>
      <feColorMatrix in="n" type="matrix" values="0.8 0 0 0 0  0.8 0 0 0 0  0.8 0 0 0 0  0 0 0 0 1" result="ng"/>
      <feComposite in="ng" in2="SourceGraphic" operator="arithmetic" k1="0" k2="1" k3="1" k4="0" result="v"/>
      <feComponentTransfer in="v">
        <feFuncR type="discrete" tableValues="0.00 0.00 0.00 0.00 0.00 0.00 0.00 0.00 0.00 0.00 0.00 0.00 0.00 0.00 0.00 0.00 0.00 0.00 0.00 0.00 0.00 0.00 0.00 0.00 0.00 0.00 0.00 0.00 0.00 0.00 0.00 0.00 0.00 0.00 0.27 0.27 0.55 0.55 0.82 0.82 0.98 0.98 0.98 0.98 0.98 0.98 0.98 0.98 0.98 0.98"/>
        <feFuncG type="discrete" tableValues="0.00 0.00 0.00 0.00 0.00 0.00 0.00 0.00 0.00 0.00 0.00 0.00 0.00 0.00 0.00 0.00 0.00 0.00 0.00 0.00 0.00 0.00 0.00 0.00 0.00 0.00 0.00 0.00 0.00 0.00 0.00 0.00 0.00 0.00 0.27 0.27 0.55 0.55 0.80 0.80 0.92 0.92 0.92 0.92 0.92 0.92 0.92 0.92 0.92 0.92"/>
        <feFuncB type="discrete" tableValues="0.50 0.50 0.50 0.50 0.50 0.50 0.50 0.50 0.50 0.50 0.50 0.50 0.50 0.50 0.50 0.50 0.50 0.50 0.50 0.50 0.50 0.50 0.50 0.50 0.50 0.82 0.82 0.82 0.82 0.82 0.82 0.82 0.82 0.82 0.74 0.74 0.48 0.48 0.25 0.25 0.04 0.04 0.04 0.04 0.04 0.04 0.04 0.04 0.04 0.04"/>
        <feFuncA type="linear" slope="0" intercept="1"/>
      </feComponentTransfer>
    </filter>
    <filter id="wfs" x="6" y="139" width="1267" height="163" filterUnits="userSpaceOnUse" color-interpolation-filters="sRGB">
      <feTurbulence type="fractalNoise" baseFrequency="0.09 0.7" numOctaves="2" seed="5" result="n"/>
      <feColorMatrix in="n" type="matrix" values="0.6 0 0 0 0  0.6 0 0 0 0  0.6 0 0 0 0  0 0 0 0 1" result="ng"/>
      <feComposite in="ng" in2="SourceGraphic" operator="arithmetic" k1="0" k2="1" k3="1" k4="0" result="v"/>
      <feColorMatrix in="v" type="matrix" values="1 0 0 0 0  0 1 0 0 0  0 0 1 0 0  1 0 0 0 0" result="va"/>
      <feComponentTransfer in="va">
        <feFuncR type="discrete" tableValues="0.80 0.80 0.80 0.80 0.80 0.80 0.80 0.80 0.80 0.80 0.80 0.80 0.80 0.80 0.80 0.80 0.80 0.80 0.80 0.80 0.80 0.80 0.80 0.80 0.80 0.80 0.80 0.80 0.80 0.80 0.78 0.78 0.78 0.97 0.97 0.97 0.97 1.00 1.00 1.00 1.00 1.00 1.00 1.00 1.00 1.00 1.00 1.00 1.00 1.00"/>
        <feFuncG type="discrete" tableValues="0.80 0.80 0.80 0.80 0.80 0.80 0.80 0.80 0.80 0.80 0.80 0.80 0.80 0.80 0.80 0.80 0.80 0.80 0.80 0.80 0.80 0.80 0.80 0.80 0.80 0.80 0.80 0.80 0.80 0.80 0.78 0.78 0.78 0.92 0.92 0.92 0.92 0.86 0.86 0.86 0.86 0.86 0.86 0.76 0.76 0.76 0.62 0.62 0.62 0.62"/>
        <feFuncB type="discrete" tableValues="0.25 0.25 0.25 0.25 0.25 0.25 0.25 0.25 0.25 0.25 0.25 0.25 0.25 0.25 0.25 0.25 0.25 0.25 0.25 0.25 0.25 0.25 0.25 0.25 0.25 0.25 0.25 0.25 0.25 0.25 0.25 0.25 0.25 0.05 0.05 0.05 0.05 0.00 0.00 0.00 0.00 0.00 0.00 0.00 0.00 0.00 0.00 0.00 0.00 0.00"/>
        <feFuncA type="discrete" tableValues="0.00 0.00 0.00 0.00 0.00 0.00 0.00 0.00 0.00 0.00 0.00 0.00 0.00 0.00 0.00 0.00 0.00 0.00 0.00 0.00 0.00 0.00 0.00 0.00 0.00 0.00 0.00 0.00 0.00 0.00 1.00 1.00 1.00 1.00 1.00 1.00 1.00 1.00 1.00 1.00 1.00 1.00 1.00 1.00 1.00 1.00 1.00 1.00 1.00 1.00"/>
      </feComponentTransfer>
    </filter>
    <linearGradient id="mg" x1="680" y1="0" x2="756" y2="0" gradientUnits="userSpaceOnUse">
      <stop offset="0" stop-color="#000"/><stop offset="0.1" stop-color="#262626"/><stop offset="0.25" stop-color="#444"/><stop offset="0.36" stop-color="#545454"/><stop offset="0.64" stop-color="#545454"/><stop offset="0.75" stop-color="#444"/><stop offset="0.9" stop-color="#262626"/><stop offset="1" stop-color="#000"/>
    </linearGradient>
  </defs>
  <g filter="url(#wfn)" fill="none" stroke-width="1">
    <rect x="6" y="139" width="1267" height="163" fill="url(#dens)" stroke="none"/>
  </g>
  <!-- zoom indicator -->
  <rect x="550" y="291" width="158" height="10" fill="#ffc000" fill-opacity="0.95"/>
  <rect x="481.5" y="291.5" width="316" height="9" fill="none" stroke="#ffb400"/>
  <g filter="url(#wfs)" fill="none" stroke-width="1">
    <rect x="680" y="139" width="76" height="163" fill="url(#mg)" stroke="none"/>
    <path d="M839 139h2M835 140h2M842 141h1M841 142h2M842 143h2M843 144h2M846 145h3M840 146h3M855 147h2M839 148h2M837 149h3M837 150h1M833 151h1M839 152h1M839 153h2M846 154h2M841 155h1M840 156h1M838 157h2M848 158h3M837 159h2M843 160h3M846 161h1M843 162h2M843 163h2M840 164h3M852 165h3M833 166h1M844 167h2M838 168h3M850 169h2M844 170h2M840 171h2M841 172h3M849 173h2M847 174h2M838 175h3M852 176h2M848 177h3M842 179h2M843 180h2M851 181h3M845 182h3M851 183h1M848 184h2M837 185h3M844 187h2M855 189h1M848 190h2M844 191h2M847 192h1M843 193h2M843 195h3M843 196h3M847 199h3M844 200h2M846 202h3M843 206h2M853 207h2M852 208h1M861 209h2M846 210h2M845 212h1M848 213h3M848 214h2M856 215h2M854 216h2M845 217h2M853 218h1M849 219h2M851 220h1M855 222h1M863 223h1M844 224h3M848 225h1M859 226h2M850 228h2M849 231h2M854 233h2M846 234h3M849 235h3M848 236h2M842 237h1M854 241h3M849 242h2M844 244h2M851 245h1M852 246h1M845 247h1M853 249h2M850 250h2M847 251h1M845 253h1M852 254h1M840 255h2M850 256h2M849 257h1M852 258h2M851 259h2M845 260h3M856 261h3M846 263h3M854 264h2M845 267h1M856 268h2M854 269h2M851 270h3M853 271h3M851 272h2M854 273h2M849 275h2M857 276h3M848 277h1M851 278h2M845 281h2M850 282h3M848 283h3M851 284h1M855 285h2M855 286h1M851 289h2M847 290h2M849 291h2M846 292h3M852 293h3M850 295h2M850 296h3M852 297h2M854 298h2M851 300h3M849 139h2M840 140h2M839 141h2M847 142h2M835 143h2M847 144h2M844 145h2M833 146h2M838 149h1M842 151h2M848 155h2M847 158h2M849 161h1M846 162h2M843 164h2M847 165h2M846 166h2M844 170h3M850 171h2M852 172h1M853 175h3M836 176h2M855 178h3M855 179h2M850 181h2M856 182h2M843 183h2M839 184h2M850 185h2M858 186h2M840 187h1M844 189h2M860 190h1M847 192h3M850 193h2M844 194h1M838 197h3M850 199h3M843 202h3M844 203h1M855 209h1M842 210h1M855 211h3M849 212h2M843 215h2M849 216h2M841 217h2M857 218h1M859 222h2M849 223h1M837 224h2M857 225h1M845 226h3M842 227h2M852 228h2M844 230h3M859 231h1M848 234h2M852 235h2M853 240h2M849 243h2M855 248h3M858 250h3M858 255h1M851 259h1M848 260h2M854 266h1M847 267h2M858 268h1M854 269h2M850 271h2M847 275h1M861 278h3M857 281h3M854 282h2M839 283h2M849 284h1M852 285h2M842 287h2M851 289h3M856 294h2M847 296h2M851 297h2M848 298h1M846 300h3" stroke="#494949"/>
    <path d="M1222 140h2M1226 144h1M1218 148h3M1232 149h2M1230 150h3M1228 151h2M1230 152h2M1208 153h1M1225 156h1M1226 158h2M1217 160h2M1222 161h2M1225 163h1M1208 164h2M1217 165h1M1229 166h2M1219 167h2M1226 169h3M1243 170h2M1225 172h3M1215 175h1M1215 176h3M1233 177h3M1235 178h3M1222 183h3M1231 186h2M1227 189h2M1232 191h3M1225 195h2M1211 196h2M1209 200h3M1228 203h1M1226 204h2M1209 205h1M1220 206h1M1229 208h2M1205 213h3M1234 214h3M1223 216h2M1215 217h3M1211 223h2M1216 224h2M1233 225h2M1243 226h2M1218 227h1M1235 228h2M1227 230h1M1228 231h1M1216 233h3M1236 234h1M1227 238h2M1225 240h1M1232 245h1M1238 247h2M1230 249h3M1217 250h2M1227 253h3M1220 254h2M1231 256h3M1216 261h2M1229 262h2M1229 265h2M1221 268h2M1223 270h3M1221 273h2M1223 275h2M1220 276h3M1247 278h2M1218 282h1M1227 287h2M1215 291h2M1232 292h2M1235 296h2M1230 300h1M1233 139h3M1237 140h1M1218 141h2M1215 143h3M1219 146h2M1245 147h1M1235 149h1M1204 154h3M1246 155h3M1262 156h2M1250 164h2M1227 165h2M1195 173h2M1216 175h2M1201 176h2M1237 184h1M1226 185h1M1214 186h1M1230 191h2M1229 194h1M1227 197h2M1243 199h3M1205 205h3M1245 211h3M1240 215h3M1243 219h2M1214 221h3M1216 223h2M1222 226h2M1211 233h2M1232 240h2M1235 244h2M1224 245h3M1237 252h1M1204 253h3M1202 255h2M1237 257h2M1247 259h1M1247 263h2M1204 264h1M1250 266h3M1239 268h2M1205 270h2M1256 271h2M1228 272h2M1228 285h2M1246 288h1M1232 290h2M1205 298h3M1249 300h1" stroke="#424242"/>
    <path d="M272 139h3M273 139h4M270 140h4M269 141h3M272 142h3M276 142h1M271 143h3M271 144h1M269 145h5M269 145h1M271 146h6M274 147h1M269 148h5M272 149h5M272 150h2M270 151h3M283 151h3M271 153h6M271 154h4M278 154h1M272 155h4M271 156h8M272 157h4M271 158h7M274 159h2M274 160h2M277 160h4M270 161h5M279 161h3M270 162h7M268 164h6M272 165h2M273 165h2M268 166h6M269 167h6M270 168h2M274 168h2M272 169h3M275 169h2M270 170h6M269 171h7M268 171h4M269 172h5M270 172h1M270 173h5M272 174h2M279 174h4M271 175h4M274 175h1M272 176h4M272 176h3M272 177h4M278 177h1M270 179h3M270 179h2M272 181h3M270 182h5M272 183h4M272 184h5M271 185h4M270 186h5M272 187h3M274 187h1M270 188h5M272 189h1M270 190h4M269 191h5M265 191h3M273 192h2M268 193h5M273 194h3M271 195h5M270 195h4M269 196h7M271 196h3M272 197h3M273 198h3M265 198h4M270 199h1M271 200h3M271 201h4M271 202h3M269 202h2M271 203h3M267 203h4M273 204h2M271 205h2M272 206h4M271 207h1M269 208h4M269 209h4M268 210h7M269 210h1M268 211h5M268 212h5M263 212h3M269 213h4M269 214h5M271 215h4M270 216h8M270 217h4M269 218h6M268 219h7M270 220h1M270 221h6M272 222h2M270 223h7M271 224h3M269 225h4M272 226h2M272 227h1M272 228h3M273 229h4M270 230h3M277 230h1M275 231h1M270 232h6M273 233h1M270 234h5M272 235h2M270 236h7M272 237h1M273 238h1M271 239h3M265 239h3M269 240h5M271 241h2M272 241h3M268 242h6M270 243h4M272 244h4M270 245h1M270 246h4M274 247h1M271 248h4M270 249h6M270 250h3M270 251h3M272 252h5M277 252h2M273 253h1M271 254h4M269 255h4M272 256h2M273 257h3M270 258h7M270 259h7M269 259h3M272 260h2M271 261h4M279 261h4M270 262h4M270 263h4M266 263h1M270 264h4M269 265h6M269 266h5M271 267h5M273 268h2M275 268h4M271 269h6M270 270h3M269 271h6M272 272h4M269 273h8M268 274h7M266 274h4M270 275h4M270 276h7M281 276h3M271 277h6M270 278h5M273 279h2M269 280h7M277 280h4M269 281h3M269 282h4M272 282h2M272 283h1M271 284h1M271 285h4M272 286h2M274 287h3M272 289h1M270 290h4M267 291h5M268 292h4M271 293h3M273 293h3M272 294h3M270 295h7M271 296h3M271 297h1M272 298h3M270 299h5M270 300h4M271 301h4M271 301h3" stroke="#686868"/>
    <path d="M461 139h1M464 139h4M462 140h3M461 140h1M462 141h1M463 142h2M463 144h2M465 144h4M464 145h1M463 148h1M466 148h1M463 149h1M465 149h2M464 150h1M458 150h3M463 151h2M465 151h4M462 152h4M464 153h1M461 153h1M463 154h1M464 154h4M460 155h2M462 156h3M462 157h3M461 159h1M461 161h2M461 162h2M461 163h2M462 164h2M462 165h1M461 166h2M462 167h4M461 168h2M462 169h1M463 170h2M467 170h3M463 171h2M463 172h2M463 174h2M462 175h2M464 177h2M465 178h2M473 178h2M463 179h2M463 181h1M462 181h3M460 183h4M462 186h3M463 187h1M461 188h3M460 189h4M461 190h4M455 190h4M460 191h3M461 192h3M463 194h1M463 194h3M463 195h1M460 197h3M460 198h2M459 199h3M462 201h2M462 201h2M460 202h3M468 202h1M462 204h2M465 204h2M464 207h1M464 207h2M462 208h3M463 209h3M470 209h3M464 211h1M462 212h2M464 213h2M467 213h2M462 214h4M461 214h4M462 216h4M463 216h3M462 217h4M462 217h4M462 218h3M461 220h3M463 221h2M471 221h3M464 222h2M464 223h2M462 224h2M462 224h1M462 226h1M461 227h2M461 228h4M465 228h2M463 230h2M462 231h3M461 232h2M460 233h3M461 234h3M461 235h2M462 236h1M463 237h2M463 238h1M462 240h2M460 241h3M461 242h2M462 244h3M464 245h1M464 246h2M461 247h3M466 247h2M463 248h2M462 249h2M461 250h4M472 250h1M460 251h4M462 252h2M462 254h4M461 255h4M460 256h3M463 257h1M461 258h4M462 258h4M460 259h3M461 260h2M461 261h3M458 261h3M463 262h1M463 264h1M463 266h3M464 267h4M462 269h1M462 272h2M462 273h3M460 274h3M462 275h2M462 276h1M469 276h2M462 277h2M463 278h2M462 279h3M462 280h3M463 281h2M467 281h4M461 282h3M459 282h3M463 283h3M463 284h2M461 285h2M466 285h1M460 286h3M458 286h1M461 287h3M462 288h2M461 289h2M462 290h1M461 291h3M462 292h1M462 294h2M461 295h3M460 295h4M464 296h3M462 297h3M466 297h2M463 299h3M462 300h1M468 300h2" stroke="#646464"/>
    <path d="M695 139h10M733 139h5M733 139h3M737 140h4M699 140h3M733 141h5M735 141h8M698 141h6M736 142h6M701 142h5M735 143h4M692 144h2M701 144h4M735 144h8M733 144h2M733 145h5M736 145h2M733 146h6M731 146h2M693 147h6M697 148h4M691 148h10M729 148h8M691 149h6M738 149h4M696 149h2M732 149h8M744 150h5M690 150h10M688 150h6M740 151h10M733 152h10M691 152h4M740 152h3M737 152h5M693 153h4M730 153h8M696 154h10M691 154h10M730 154h8M738 154h4M695 155h2M729 155h5M700 156h3M732 156h3M734 157h4M699 157h5M701 158h6M703 158h3M734 158h5M696 158h5M741 159h10M733 160h2M702 160h4M734 160h4M740 160h4M690 161h2M698 162h4M692 162h10M704 162h3M733 163h2M691 164h10M693 164h6M731 164h2M693 165h4M702 165h2M698 166h8M696 166h3M729 166h4M691 166h10M687 167h8M696 167h5M739 167h6M732 168h4M695 168h5M700 169h2M732 170h10M731 170h2M748 170h8M732 171h10M682 171h2M691 171h8M696 172h8M742 172h2M731 172h10M734 173h6M730 173h4M736 174h4M743 174h10M684 175h5M732 175h4M699 176h3M692 176h4M734 177h8M687 177h8M698 178h10M756 178h5M694 178h10M734 179h4M730 179h10M692 180h8M686 180h6M730 181h6M734 181h2M692 181h8M731 181h2M703 182h6M733 182h3M736 182h5M738 183h8M734 184h4M733 184h3M745 185h4M733 185h4M690 186h4M687 186h8M737 187h3M698 187h2M701 188h5M732 189h4M730 189h5M697 189h8M736 189h8M730 190h6M702 190h2M730 190h2M737 191h6M732 191h5M701 191h2M732 192h4M736 193h2M746 193h10M700 193h6M691 194h3M691 194h2M736 195h2M700 195h6M734 195h2M692 196h4M693 196h8M732 197h10M680 197h6M732 197h6M689 198h3M732 198h10M735 198h5M698 199h2M754 199h4M697 199h3M731 200h5M701 200h3M739 200h5M691 201h2M738 201h8M698 202h4M730 202h8M690 202h3M695 203h2M732 203h5M696 204h5M746 204h3M732 204h4M692 204h10M679 205h6M733 205h8M740 205h2M703 206h2M691 206h2M689 207h5M698 207h2M734 207h8M734 208h10M694 209h8M746 209h6M696 209h2M701 210h3M700 210h6M686 210h6M736 210h3M681 211h6M731 211h8M701 212h3M697 212h6M740 212h5M685 212h10M732 213h8M701 213h5M733 213h8M700 213h3M689 214h8M744 214h3M733 214h2M702 214h3M703 215h3M698 215h8M699 215h6M734 216h8M699 216h3M698 216h2M736 217h6M741 217h6M741 217h6M736 218h10M733 218h3M691 218h8M743 219h3M730 219h4M701 219h3M700 220h4M732 220h3M730 220h5M738 221h6M691 221h8M736 222h6M737 222h3M736 223h6M698 224h5M695 224h10M733 225h4M692 226h6M738 226h3M737 226h10M731 226h4M693 227h3M743 228h2M698 228h10M699 229h6M732 230h4M702 230h2M732 230h4M702 231h3M703 231h3M704 231h2M693 232h2M696 232h6M700 233h4M731 233h6M744 233h6M687 233h2M736 234h10M732 234h4M736 234h8M704 235h4M732 235h8M748 235h3M698 236h5M730 236h5M694 237h6M731 237h5M738 237h2M732 238h8M699 239h6M696 240h4M692 240h2M731 241h3M735 241h8M689 241h3M735 242h8M694 243h5M730 243h8M732 244h3M732 244h2M742 244h6M704 244h2M697 245h8M732 245h6M693 245h8M699 246h4M695 246h2M692 247h10M685 247h8M727 248h4M733 249h6M733 249h2M695 249h5M687 250h8M698 250h3M735 250h4M735 251h10M697 251h2M731 252h10M689 252h5M731 252h10M685 253h10M730 253h6M693 254h10M732 254h4M737 254h3M735 254h6M740 255h2M734 255h3M697 255h8M734 256h5M739 257h4M699 257h3M738 258h4M734 258h6M741 259h10M737 259h10M705 259h6M704 260h2M697 260h4M704 260h6M745 260h8M738 261h6M702 261h2M700 261h8M695 261h5M710 262h2M744 262h10M707 262h3M691 263h8M740 263h8M704 263h5M699 264h8M742 264h5M697 265h10M744 266h10M684 266h6M698 266h6M742 266h8M703 267h6M700 267h3M739 267h3M737 268h5M740 268h5M701 269h3M743 270h6M699 270h8M691 271h5M694 271h3M697 271h6M744 272h5M693 272h3M734 272h10M694 273h3M698 273h10M707 274h3M750 274h6M699 274h3M747 275h6M741 275h8M694 276h8M702 277h4M737 277h5M732 277h8M748 278h6M707 279h2M683 279h10M737 280h4M732 280h8M704 281h4M735 281h5M684 281h10M731 282h2M733 282h5M687 282h6M739 283h3M690 283h5M690 283h3M703 283h2M741 284h6M696 285h8M736 285h8M685 285h6M695 286h3M734 287h10M684 288h6M737 288h4M686 288h10M735 289h8M732 289h3M733 290h3M741 290h2M749 290h8M703 290h3M734 291h4M733 291h4M696 291h3M729 291h4M736 292h10M732 292h5M732 292h2M731 293h3M704 293h4M698 293h10M704 293h4M689 294h10M692 294h8M703 294h2M736 295h2M691 295h4M704 295h2M700 296h2M744 296h8M738 296h8M698 296h3M742 297h8M734 297h2M695 297h6M740 297h5M701 298h2M704 298h5M747 298h3M701 299h6M701 299h3M697 299h10M703 300h4M731 300h10M699 300h6M691 301h8M704 301h2" stroke="#484848"/>
    <path d="M707 139h23M705 140h23M709 141h19M703 142h32M709 143h22M707 144h24M706 145h22M704 146h28M703 147h27M706 148h22M706 149h22M702 150h32M706 151h25M709 152h18M703 153h31M700 154h37M702 155h30M708 156h20M711 157h16M712 158h15M706 159h27M704 160h31M704 161h32M709 162h20M705 163h29M709 164h20M704 165h24M707 166h20M708 167h20M703 168h28M704 169h27M702 170h28M706 171h20M704 172h27M703 173h30M706 174h22M703 175h30M708 176h24M705 177h28M710 178h19M707 179h24M707 180h22M708 181h22M709 182h22M707 183h23M709 184h19M704 185h28M705 186h23M699 187h36M705 188h24M700 189h33M709 190h16M706 191h21M706 192h22M705 193h26M707 194h21M705 195h28M710 196h15M700 197h33M698 198h37M703 199h29M706 200h23M705 201h25M704 202h24M703 203h26M699 204h38M706 205h26M707 206h21M709 207h17M706 208h25M707 209h25M703 210h33M704 211h27M704 212h27M702 213h34M709 214h22M709 215h23M705 216h30M705 217h29M708 218h22M707 219h24M703 220h31M707 221h23M706 222h28M707 223h28M706 224h29M711 225h19M708 226h24M705 227h30M709 228h22M706 229h27M707 230h24M703 231h29M706 232h23M705 233h27M706 234h28M709 235h22M708 236h22M710 237h14M705 238h25M706 239h24M703 240h27M705 241h23M707 242h22M705 243h24M706 244h24M706 245h20M699 246h32M706 247h19M700 248h31M705 249h21M704 250h25M703 251h27M703 252h29M704 253h26M703 254h31M709 255h21M707 256h25M706 257h30M711 258h23M710 259h26M710 260h26M703 261h36M707 262h32M708 263h29M704 264h37M710 265h24M707 266h31M710 267h20M710 268h21M708 269h24M709 270h22M707 271h29M709 272h24M709 273h28M711 274h23M710 275h22M706 276h29M708 277h25M710 278h24M709 279h26M708 280h25M710 281h23M704 282h29M703 283h27M705 284h25M710 285h14M708 286h21M704 287h27M707 288h22M709 289h20M704 290h31M706 291h24M708 292h20M711 293h17M706 294h27M710 295h24M707 296h28M712 297h21M706 298h29M711 299h19M703 300h32M708 301h23" stroke="#767676"/>
    <path d="M712 139h3M714 139h4M713 140h4M719 140h3M707 140h1M717 141h4M717 141h3M715 141h1M722 142h5M704 142h2M719 142h2M710 143h4M712 143h2M725 143h4M718 143h4M718 144h5M723 144h4M722 144h3M712 145h1M714 145h2M719 145h1M715 146h2M714 146h5M713 147h1M712 147h1M714 147h4M715 148h4M712 148h5M719 148h3M711 149h3M709 149h2M716 149h3M712 150h4M711 150h4M711 150h2M709 150h5M713 151h3M724 151h3M720 152h2M716 152h5M719 152h3M711 153h3M717 153h5M709 153h3M704 154h2M715 154h2M711 155h1M720 155h3M709 155h3M715 156h1M718 156h2M724 157h4M720 157h1M725 157h1M717 157h2M716 158h3M723 158h4M716 159h2M716 159h1M719 160h2M715 160h1M719 160h5M722 160h4M716 161h2M729 161h4M719 161h5M716 161h1M724 162h5M718 162h3M719 163h5M722 163h1M711 163h4M719 164h3M708 164h5M713 164h5M713 165h4M714 165h4M718 166h2M715 166h4M721 166h3M720 167h4M720 167h1M714 168h4M717 168h4M714 169h4M710 169h2M706 169h2M706 170h2M719 170h2M713 170h1M716 171h5M714 171h5M719 172h5M716 172h2M712 172h1M712 172h4M714 173h2M711 173h3M716 173h5M722 173h2M718 174h3M715 174h1M705 174h3M714 175h5M713 175h2M716 175h3M720 176h5M727 176h4M716 177h1M715 177h1M719 177h5M721 177h1M714 178h4M715 178h5M719 179h1M713 179h2M706 180h3M720 180h1M725 180h5M718 180h5M716 181h2M714 181h1M722 182h5M722 182h3M714 183h5M710 183h1M717 184h3M715 184h3M719 184h1M719 185h1M718 185h3M714 185h3M710 185h5M712 186h1M710 186h5M720 187h5M713 187h1M704 188h2M718 188h5M720 188h4M724 188h1M720 189h3M715 189h4M715 189h5M716 189h3M711 190h3M713 190h4M712 191h3M713 191h2M708 191h2M715 191h1M709 192h5M720 192h2M710 192h3M716 192h4M721 193h1M713 193h3M722 193h4M714 193h3M711 194h5M720 194h2M716 194h5M710 195h5M728 195h5M712 195h3M724 195h3M714 196h4M725 196h1M722 196h5M714 196h2M723 197h3M714 197h4M710 197h2M716 198h5M714 198h2M717 199h1M719 199h1M715 199h2M718 199h4M717 200h1M718 200h4M710 200h1M716 201h5M719 201h4M708 202h4M697 202h5M720 202h2M716 203h1M709 203h5M718 203h4M727 204h5M711 204h1M724 205h4M717 205h4M718 205h3M709 205h5M711 206h4M721 206h4M709 206h1M716 206h1M702 207h1M708 207h1M717 207h2M719 207h3M717 208h2M715 208h2M711 208h3M721 209h1M722 209h4M720 210h4M720 210h3M716 210h5M715 211h2M709 211h1M712 212h2M707 212h4M716 212h2M712 213h5M703 213h1M722 214h4M717 214h4M721 214h5M722 214h3M706 215h2M719 215h2M715 216h5M712 216h1M725 217h2M717 217h5M725 217h1M713 217h3M718 218h3M736 218h3M716 218h4M717 219h4M723 219h3M716 219h5M712 220h5M716 220h2M716 220h2M709 221h3M711 221h1M716 221h5M714 221h5M714 222h4M718 222h3M722 222h5M720 223h1M717 223h3M716 223h1M720 224h5M712 224h2M712 225h1M718 225h3M724 226h3M708 226h4M722 226h4M721 227h4M717 227h2M722 227h5M721 227h4M708 228h2M723 228h1M705 229h1M717 229h5M716 229h2M718 230h5M730 230h3M714 230h1M711 230h4M719 231h3M715 231h2M709 232h5M710 232h1M715 233h4M717 233h4M703 233h4M710 233h2M713 234h3M720 234h1M725 235h1M721 235h1M723 235h3M719 236h1M721 236h1M721 236h3M713 236h4M714 237h5M718 237h1M710 237h2M710 238h5M711 238h1M721 238h1M719 239h1M725 239h3M723 240h5M710 240h4M709 241h1M724 241h5M718 242h2M707 242h4M716 243h4M718 243h3M714 243h3M714 243h4M719 244h1M719 244h5M720 244h4M720 245h3M723 245h4M717 245h5M716 246h3M707 246h4M714 246h1M715 246h2M724 247h3M711 247h1M712 247h3M709 248h5M715 248h2M717 249h5M721 249h4M706 250h5M704 250h5M730 251h1M707 251h5M714 252h4M722 252h2M717 252h1M721 252h4M720 253h4M719 253h3M710 253h3M714 254h1M715 254h4M723 254h3M715 254h5M718 255h2M727 255h2M710 255h5M718 256h1M711 256h3M706 256h1M719 256h1M728 257h2M723 257h3M716 258h4M717 258h5M724 258h3M723 259h5M722 259h2M716 259h2M734 260h1M716 260h1M724 260h4M726 260h3M719 261h2M721 261h1M724 262h1M723 262h5M718 262h4M728 263h5M714 263h5M721 263h1M713 264h3M723 264h5M714 264h5M721 265h1M727 265h1M721 266h4M728 266h5M720 267h5M723 267h2M715 267h4M724 268h2M722 268h5M723 269h5M726 269h2M722 269h5M716 270h1M717 270h5M716 270h4M715 270h5M733 271h5M722 271h5M720 271h5M727 272h3M719 272h5M723 273h3M721 273h3M725 273h3M719 274h2M724 274h3M730 275h5M714 275h5M714 276h3M725 276h5M718 277h5M714 277h1M721 278h5M717 278h4M721 278h2M717 278h4M723 279h5M724 279h4M726 279h5M712 280h5M718 280h1M721 281h2M718 281h3M731 281h5M720 282h3M722 282h1M720 283h1M720 283h3M719 283h2M710 283h3M715 284h3M728 284h4M724 284h1M705 284h2M721 285h4M714 285h5M717 285h4M714 285h2M726 286h5M717 286h3M720 286h1M708 287h1M713 287h5M715 287h1M718 288h3M717 288h2M723 288h1M723 289h5M720 289h5M722 289h5M711 290h5M717 290h1M712 290h4M719 290h1M712 291h2M705 291h3M720 291h1M714 291h3M720 292h2M711 292h4M707 293h2M717 293h1M715 293h5M721 294h1M720 294h1M727 294h1M714 294h2M717 295h2M719 295h4M726 296h4M721 296h1M724 296h5M723 297h2M726 297h2M716 298h1M718 298h1M714 298h3M716 298h2M726 299h3M736 299h3M710 299h4M720 299h1M718 300h5M715 300h3M708 300h2M716 300h2M720 301h2M718 301h1M724 301h3" stroke="#a8a8a8"/>
  </g>

  <text x="799.3" y="300" font-family="Liberation Sans, DejaVu Sans, sans-serif" font-size="12" fill="#ffc000">Zoom: 2x</text>
  <rect x="5" y="134" width="1" height="168" fill="#8ea4c4"/>
  <rect x="6" y="302" width="1269" height="2" fill="#fff"/>
  <rect x="1273" y="139" width="2" height="164" fill="#fff"/>
</svg>

<!-- audio bar -->
<div id="audio" class="abs"></div>
<div class="abs" style="left:59px;top:309px;width:1px;height:30px;background:#7b8fc0"></div>
<div class="abs" style="left:670px;top:309px;width:1px;height:30px;background:#7b8fc0"></div>
<svg class="abs" style="left:21px;top:314px" width="23" height="20" viewBox="0 0 23 20">
  <path d="M1 6.8 H5.3 L11 1 V19 L5.3 13.2 H1Z" fill="#0a8c0a"/>
  <path d="M13.4 5.6 Q16.6 10 13.4 14.4" fill="none" stroke="#0a8c0a" stroke-width="2.3"/>
  <path d="M16.2 2 Q23 10 16.2 18" fill="none" stroke="#0a8c0a" stroke-width="2.4"/>
</svg>

<!-- upper tabs -->
<div class="abs" style="left:5px;top:367px;width:1270px;height:406px;border:1px solid #b8cfe5"></div>
<div class="abs" style="left:1272px;top:368px;width:2px;height:404px;background:#fbfbfb"></div>
<div class="abs" style="left:6px;top:771px;width:1268px;height:1px;background:#fbfbfb"></div>
<div class="abs" style="left:6px;top:505px;width:1px;height:267px;background:#fbfbfb"></div>
<div class="tabsel" style="left:13px;top:341px;width:87px;height:27px"></div>
<div class="sepv" style="left:134px;top:343px;height:23px"></div>
<div class="sepv" style="left:184px;top:343px;height:23px"></div>
<div class="sepv" style="left:292px;top:343px;height:23px"></div>
<svg class="abs" style="left:191px;top:346px" width="18" height="18" viewBox="0 0 18 18"><circle cx="9.3" cy="8.7" r="7.4" fill="none" stroke="#3a3a3a" stroke-width="2.2"/><path d="M6.8 4.6 L13.6 8.7 L6.8 12.8Z" fill="#3a3a3a"/></svg>

<!-- table -->
<div class="abs" style="left:7px;top:369px;width:1265px;height:133px;border:1px solid #7a8a99"></div>
<div class="hcell" style="left:8px;width:139px"></div>
<div class="hcell" style="left:147px;width:139px"></div>
<div class="hcell" style="left:286px;width:139px"></div>
<div class="hcell" style="left:425px;width:139px"></div>
<div class="hcell" style="left:564px;width:139px"></div>
<div class="hcell" style="left:703px;width:138px"></div>
<div class="hcell" style="left:841px;width:139px"></div>
<div class="hcell" style="left:980px;width:138px"></div>
<div class="hcell" style="left:1118px;width:138px"></div>
<svg class="abs" style="left:1256px;top:391px" width="15" height="110" viewBox="0 0 15 110" shape-rendering="crispEdges">
  <rect x="0" y="0" width="15" height="110" fill="#eee"/>
  <rect x="0" y="0" width="1" height="110" fill="#7a8a99"/>
  <rect x="1" y="0" width="14" height="1" fill="#fff"/><rect x="1" y="0" width="1" height="15" fill="#fff"/><rect x="1" y="15" width="14" height="1" fill="#7a8a99"/>
  <rect x="1" y="16" width="14" height="1" fill="#b8cfe5"/><rect x="1" y="16" width="1" height="78" fill="#b8cfe5"/>
  <rect x="1" y="94" width="14" height="1" fill="#7a8a99"/><rect x="1" y="95" width="14" height="1" fill="#fff"/><rect x="1" y="95" width="1" height="14" fill="#fff"/><rect x="1" y="109" width="14" height="1" fill="#7a8a99"/>
</svg>
<svg class="abs" style="left:1259px;top:396px" width="10" height="4" viewBox="0 0 10 4" shape-rendering="crispEdges"><path d="M4 0h1v1h1v1h1v1h1v1h-7v-1h1v-1h1v-1h1z" fill="#222"/></svg>
<svg class="abs" style="left:1259px;top:491px" width="10" height="4" viewBox="0 0 10 4" shape-rendering="crispEdges"><path d="M0 0h9v1h-1v1h-1v1h-1v1h-3v-1h-1v-1h-1v-1h-1z" fill="#222"/></svg>

<!-- divider -->
<div class="abs" style="left:11px;top:504px;width:1257px;height:1px;background:repeating-linear-gradient(90deg,#8c98a4 0 1px,transparent 1px 4px)"></div>

<!-- lower tabs -->
<div class="abs" style="left:7px;top:529px;width:1266px;height:242px;border:1px solid #b8cfe5"></div>
<div class="abs" style="left:8px;top:768px;width:1264px;height:2px;background:#fdfdfd"></div>
<div class="abs" style="left:1270px;top:530px;width:2px;height:240px;background:#fdfdfd"></div>
<div class="abs" style="left:8px;top:560px;width:1px;height:210px;background:#fdfdfd"></div>
<div class="tabsel" style="left:15px;top:508px;width:53px;height:22px"></div>
<div class="sepv" style="left:114px;top:510px;height:18px"></div>
<div class="sepv" style="left:182px;top:510px;height:18px"></div>
<div class="sepv" style="left:239px;top:510px;height:18px"></div>

<div class="abs" style="left:1190px;top:532px;width:80px;height:27px;border:1px solid #7a8a99;background:linear-gradient(#dde8f3,#fff 30%,#b8cfe5)"></div>
<div class="abs" style="left:1191px;top:533px;width:78px;height:25px;border:1px solid #fff;border-right:none;border-bottom:none;opacity:.9"></div>

<div class="abs" style="left:9px;top:560px;width:1261px;height:208px;background:#fff;border:1px solid #7a8a99"></div>

<!-- status bar -->
<div class="abs" style="left:5px;top:773px;width:1270px;height:22px;background:#f4f4f4;border-bottom:1px solid #fff"></div>
<div class="pb" style="left:51px"></div><div class="pf" style="left:54px;width:35px"></div>
<div class="pb" style="left:278px"></div>
<div class="pb" style="left:480px"></div><div class="pf" style="left:483px;width:50px"></div>
<div class="pb" style="left:662px"></div>
<div class="pb" style="left:906px"></div>
<div class="t" style="left:141.3px;top:317.1px;font-size:16px;color:#00f000;letter-spacing:4.75px">-----</div>
<div class="t" style="left:761.8px;top:317.1px;font-size:16px;color:#00f000;letter-spacing:4.8px">-----</div>
<div class="t" id="title" style="left:501.57px;top:10.14px;font-size:12px;font-weight:bold;color:#fff;letter-spacing:-0.230px;">sdrtrunk v0.6.1 - RSP1B SER:240107DA60</div>
<div class="t" id="mfile" style="left:10.72px;top:34.34px;font-size:12px;font-weight:bold;color:#333;letter-spacing:0.632px;">File</div>
<div class="t" id="mview" style="left:46.24px;top:34.34px;font-size:12px;font-weight:bold;color:#333;letter-spacing:0.654px;">View</div>
<div class="t" id="msc" style="left:104.19px;top:34.34px;font-size:12px;font-weight:bold;color:#333;letter-spacing:0.225px;">S<span style="text-decoration:underline;text-underline-offset:1px">c</span>reen Capture</div>
<div class="t" id="maltc" style="left:199.98px;top:35.03px;font-size:10px;color:#7288cc;letter-spacing:0.142px;">Alt-C</div>
<div class="t" id="left" style="left:81.64px;top:316.09px;font-size:16.8px;color:#d0d0d0;letter-spacing:0.531px;font-family:'DejaVu Sans Light','Liberation Sans',sans-serif;font-weight:200;">LEFT</div>
<div class="t" id="right" style="left:693.43px;top:317.17px;font-size:17px;color:#bcbcbc;letter-spacing:-0.317px;font-family:'Liberation Mono',monospace;">RIGHT</div>
<div class="t" id="np" style="left:17.83px;top:348.44px;font-size:12px;font-weight:bold;color:#000;letter-spacing:0.463px;">Now Playing</div>
<div class="t" id="map" style="left:105.38px;top:348.44px;font-size:12px;color:#333;letter-spacing:1.270px;">Map</div>
<div class="t" id="tun" style="left:141.87px;top:348.44px;font-size:12px;color:#333;letter-spacing:0.363px;">Tuners</div>
<div class="t" id="ple" style="left:213.76px;top:348.44px;font-size:12px;color:#333;letter-spacing:0.173px;">Playlist Editor</div>
<div class="t" id="h1" style="left:59.40px;top:374.84px;font-size:12px;color:#333;letter-spacing:0.283px;">Status</div>
<div class="t" id="h2" style="left:191.32px;top:374.84px;font-size:12px;color:#333;letter-spacing:0.584px;">Decoder</div>
<div class="t" id="h3" style="left:340.47px;top:374.84px;font-size:12px;color:#333;letter-spacing:0.728px;">From</div>
<div class="t" id="h4" style="left:480.82px;top:374.84px;font-size:12px;color:#333;letter-spacing:0.233px;">Alias</div>
<div class="t" id="h5" style="left:625.67px;top:374.84px;font-size:12px;color:#333;letter-spacing:2.130px;">To</div>
<div class="t" id="h6" style="left:758.24px;top:374.84px;font-size:12px;color:#333;letter-spacing:0.155px;">Alias</div>
<div class="t" id="h7" style="left:887.16px;top:374.84px;font-size:12px;color:#333;letter-spacing:0.261px;">Channel</div>
<div class="t" id="h8" style="left:1018.48px;top:374.84px;font-size:12px;color:#333;letter-spacing:0.229px;">Frequency</div>
<div class="t" id="h9" style="left:1145.76px;top:374.84px;font-size:12px;color:#333;letter-spacing:0.288px;">Channel Name</div>
<div class="t" id="det" style="left:19.92px;top:512.84px;font-size:12px;font-weight:bold;color:#000;letter-spacing:0.489px;">Details</div>
<div class="t" id="ev" style="left:73.54px;top:512.84px;font-size:12px;color:#333;letter-spacing:0.146px;">Events</div>
<div class="t" id="msg" style="left:121.66px;top:512.84px;font-size:12px;color:#333;letter-spacing:0.443px;">Messages</div>
<div class="t" id="ch" style="left:188.79px;top:512.84px;font-size:12px;color:#333;letter-spacing:0.344px;">Channel</div>
<div class="t" id="sys" style="left:9.67px;top:539.84px;font-size:12px;font-weight:bold;color:#333;letter-spacing:0.360px;">System:</div>
<div class="t" id="site" style="left:394.36px;top:539.84px;font-size:12px;font-weight:bold;color:#333;letter-spacing:0.597px;">Site:</div>
<div class="t" id="chn" style="left:760.08px;top:539.84px;font-size:12px;font-weight:bold;color:#333;letter-spacing:0.462px;">Channel Name:</div>
<div class="t" id="ref" style="left:1206.35px;top:539.84px;font-size:12px;font-weight:bold;color:#333;letter-spacing:0.386px;">Refresh</div>
<div class="t" id="pls" style="left:9.80px;top:563.59px;font-size:12px;color:#333;letter-spacing:0.177px;">Please select a channel to view details</div>
<div class="t" id="cpu" style="left:14.84px;top:777.00px;font-size:13px;color:#333;letter-spacing:-0.658px;">CPU:</div>
<div class="t" id="am" style="left:156.89px;top:777.00px;font-size:13px;color:#333;letter-spacing:0.503px;">Allocated Memory:</div>
<div class="t" id="um" style="left:383.75px;top:777.00px;font-size:13px;color:#333;letter-spacing:0.500px;">Used Memory:</div>
<div class="t" id="el" style="left:585.31px;top:777.00px;font-size:13px;color:#333;letter-spacing:0.229px;">Event Logs:</div>
<div class="t" id="b1" style="left:767.51px;top:777.00px;font-size:13px;color:#333;letter-spacing:0.342px;">0 bytes</div>
<div class="t" id="rec" style="left:827.87px;top:777.00px;font-size:13px;color:#333;letter-spacing:0.343px;">Recordings:</div>
<div class="t" id="b2" style="left:1011.42px;top:777.00px;font-size:13px;color:#333;letter-spacing:0.346px;">0 bytes</div>
</body>
</html>
